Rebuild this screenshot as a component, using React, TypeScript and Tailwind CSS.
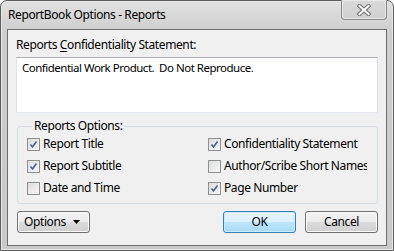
import { useState } from "react";

const font = { fontFamily: '"Noto Sans", "Open Sans", Arial, sans-serif' };

type Opt = { label: string; checked: boolean };

const leftOpts: Opt[] = [
  { label: "Report Title", checked: true },
  { label: "Report Subtitle", checked: true },
  { label: "Date and Time", checked: false },
];

const rightOpts: Opt[] = [
  { label: "Confidentiality Statement", checked: true },
  { label: "Author/Scribe Short Names", checked: false },
  { label: "Page Number", checked: true },
];

function CheckBox({ label, checked: init }: Opt) {
  const [checked, setChecked] = useState(init);
  return (
    <label className="flex h-[22px] items-center gap-[3px] whitespace-nowrap overflow-hidden">
      <span
        onClick={() => setChecked(!checked)}
        className="flex size-[13px] shrink-0 items-center justify-center border border-[#8e8f8f] bg-gradient-to-br from-[#dcdcdc] to-[#f8f8f8]"
      >
        {checked && (
          <svg width="9" height="9" viewBox="0 0 9 9">
            <path d="M1.5 4.5 L3.5 7 L7.5 1.5" fill="none" stroke="#4a5f97" strokeWidth="1.6" />
          </svg>
        )}
      </span>
      <span>{label}</span>
    </label>
  );
}

function Button({ children, primary }: { children: React.ReactNode; primary?: boolean }) {
  return (
    <button
      className={
        primary
          ? "h-[22px] w-[73px] rounded-[3px] border border-[#3c7fb1] bg-[linear-gradient(#eaf6fd_0%,#d9f0fc_50%,#bee6fd_51%,#a7d9f5_100%)] shadow-[inset_0_0_0_1px_#c8ecff]"
          : "h-[22px] w-[73px] rounded-[3px] border border-[#707070] bg-[linear-gradient(#f2f2f2_0%,#ebebeb_50%,#dddddd_51%,#cfcfcf_100%)] shadow-[inset_0_0_0_1px_#fcfcfc]"
      }
    >
      {children}
    </button>
  );
}

export default function App() {
  return (
    <div style={font} className="h-[251px] w-[394px] bg-white text-[12px] leading-[16px] tracking-[-0.4px] text-black">
      <div className="flex h-full flex-col rounded-t-[7px] border border-[#5d5d5d] bg-[linear-gradient(#e2e2e2,#cecece_30px,#c9c9c9)] pb-[4px] pl-[6px] pr-[6px] shadow-[inset_0_0_0_1px_#e6e6e6]">
        <div className="relative flex h-[28px] shrink-0 items-center pl-[1px] pb-[1px]">
          <span className="text-[12px]">ReportBook Options - Reports</span>
          <div className="absolute right-[0px] top-[-1px] flex h-[20px] w-[46px] items-center justify-center rounded-b-[4px] border border-t-0 border-[#8c8c8c] bg-[linear-gradient(#dadada,#cfcfcf)] shadow-[inset_0_0_0_1px_#e8e8e8]">
            <svg width="14" height="12" viewBox="0 0 14 12">
              <path d="M2.5 2 L11.5 10 M11.5 2 L2.5 10" stroke="#6a6a6a" strokeWidth="4" strokeLinecap="square" />
              <path d="M2.5 2 L11.5 10 M11.5 2 L2.5 10" stroke="#ffffff" strokeWidth="2" strokeLinecap="square" />
            </svg>
          </div>
        </div>

        <div className="flex flex-1 flex-col border border-[#6e6e6e] bg-[#f0f0f0] px-[8px] pt-[7px]">
          <div>
            Reports <span className="underline underline-offset-2">C</span>onfidentiality Statement:
          </div>
          <div className="mt-[4px] h-[56px] border border-[#abadb3] border-l-[#e2e3ea] border-r-[#dbdfe6] border-b-[#e3e9ef] bg-white pl-[5px] pt-[2px] text-[11.5px] tracking-[-0.5px] whitespace-pre">
            {"Confidential Work Product.  Do Not Reproduce."}
          </div>

          <fieldset className="mt-[6px] ml-px rounded-[3px] border border-[#d5dfe5] pb-[4px] pl-[9px]">
            <legend className="ml-[5px] px-[2px] leading-[14px]">Reports Options:</legend>
            <div className="grid grid-cols-[181px_159px]">
              <div className="flex flex-col">
                {leftOpts.map((o) => (
                  <CheckBox key={o.label} {...o} />
                ))}
              </div>
              <div className="flex flex-col overflow-hidden">
                {rightOpts.map((o) => (
                  <CheckBox key={o.label} {...o} />
                ))}
              </div>
            </div>
          </fieldset>

          <div className="mt-[7px] flex items-center pl-px">
            <Button>
              <span className="flex items-center pl-[6px]">
                Options
                <svg className="ml-[7px]" width="7" height="4" viewBox="0 0 7 4">
                  <path d="M0 0 H7 L3.5 4 Z" fill="#000" />
                </svg>
              </span>
            </Button>
            <div className="flex-1" />
            <div className="flex gap-[9px]">
              <Button primary>OK</Button>
              <Button>Cancel</Button>
            </div>
          </div>
        </div>
      </div>
    </div>
  );
}
